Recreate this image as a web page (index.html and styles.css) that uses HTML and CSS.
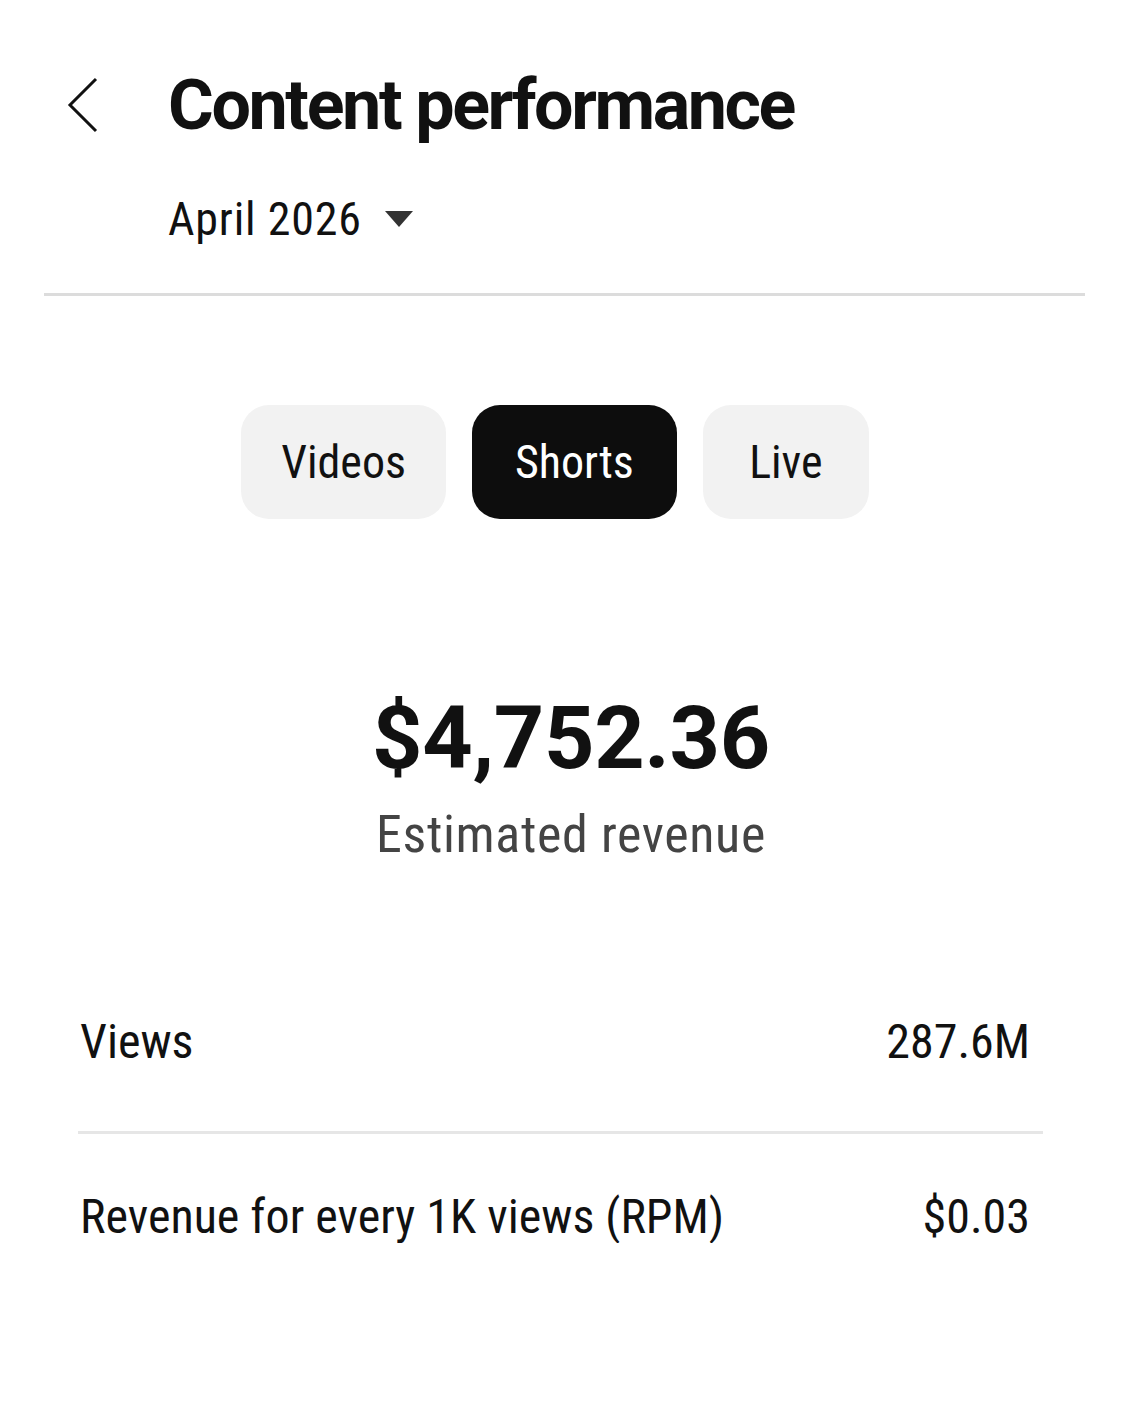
FILE: index.html
```html
<!DOCTYPE html>

<html>
    <head>
        <link rel="stylesheet" href="styles.css">
    </head>

    <body>
        <div class="page">
            <div class="header">
                <div class="title-row">
                    <svg class="back" width="32" height="56" viewBox="0 0 32 56">
                        <polyline points="29,2 3,28 29,54" fill="none" stroke="#111" stroke-width="3"/>
                    </svg>
                    <h1 class="title">Content performance</h1>
                </div>

                <div class="month">
                    April 2026
                    <svg class="caret" width="30" height="20" viewBox="0 0 30 20">
                        <polygon points="1,2 29,2 15,18" fill="#333"/>
                    </svg>
                </div>
            </div>

            <div class="tabs">
                <div class="tab">Videos</div>
                <div class="tab active">Shorts</div>
                <div class="tab">Live</div>
            </div>

            <div class="summary">
                <div class="amount">$4,752.36</div>
                <div class="caption">Estimated revenue</div>
            </div>

            <div class="stats">
                <div class="row">
                    <span>Views</span>
                    <span>287.6M</span>
                </div>
                <div class="row">
                    <span>Revenue for every 1K views (RPM)</span>
                    <span>$0.03</span>
                </div>
            </div>
        </div>
    </body>
</html>
```

FILE: styles.css
```css
body
{
    margin: 0;
    background: #fff;
    color: #111;
    font-family: "Roboto Condensed", Roboto, "Liberation Sans", sans-serif;
}

.page
{
    width: 1122px;
}

.header
{
    margin: 0 37px 0 44px;
    padding-top: 70px;
    padding-bottom: 51px;
    border-bottom: 3px solid #dcdcdc;
}

.title-row
{
    display: flex;
    align-items: center;
}

.back
{
    margin-left: 23px;
    margin-right: 69px;
}

.title
{
    margin: 0;
    font-family: Roboto, "Liberation Sans", sans-serif;
    font-size: 70px;
    line-height: 70px;
    font-weight: 700;
    letter-spacing: -2.4px;
}

.month
{
    display: flex;
    align-items: center;
    margin-top: 56px;
    margin-left: 124px;
    font-size: 46px;
    line-height: 46px;
    letter-spacing: 0.8px;
}

.caret
{
    margin-left: 22px;
}

.tabs
{
    display: flex;
    justify-content: center;
    gap: 26px;
    margin-top: 109px;
    padding-right: 12px;
}

.tab
{
    box-sizing: border-box;
    min-width: 166px;
    height: 114px;
    padding: 0 40px;
    border-radius: 28px;
    background: #f2f2f2;
    font-size: 46px;
    line-height: 114px;
    text-align: center;
}

.tab.active
{
    padding: 0 43px;
    background: #0d0d0d;
    color: #fff;
}

.summary
{
    margin-top: 175px;
    padding-left: 20px;
    text-align: center;
}

.amount
{
    font-family: Roboto, "Liberation Sans", sans-serif;
    font-size: 88px;
    line-height: 88px;
    font-weight: 700;
    letter-spacing: -0.3px;
}

.caption
{
    margin-top: 27px;
    font-size: 52px;
    line-height: 52px;
    color: #444;
    letter-spacing: 0.65px;
}

.stats
{
    margin: 155px 79px 0 78px;
}

.row
{
    display: flex;
    justify-content: space-between;
    padding: 0 13px 0 2px;
    font-size: 48px;
    line-height: 52px;
}

.row + .row
{
    margin-top: 63px;
    padding-top: 57px;
    border-top: 3px solid #e6e6e6;
}
```
